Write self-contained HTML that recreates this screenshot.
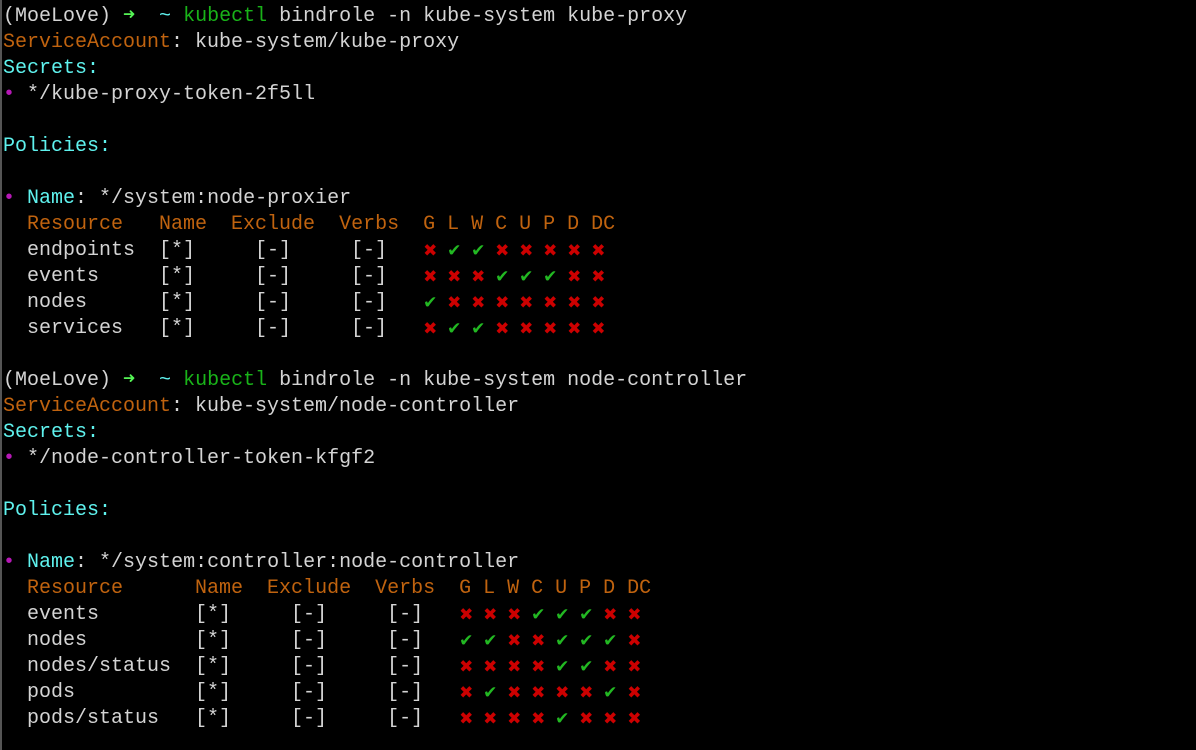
<!DOCTYPE html>
<html><head><meta charset="utf-8"><style>
html,body{margin:0;padding:0;background:#000;width:1196px;height:750px;overflow:hidden}
body{border-left:2px solid #555;box-sizing:border-box}
pre{margin:0;padding:4px 0 0 1px;font-family:"Liberation Mono","DejaVu Sans Mono",monospace;font-size:20px;line-height:26px;color:#d4d4d4;white-space:pre}
.o{color:#c0630f}.c{color:#5ff2ee}.g{color:#19b319}.a{color:#55f555;display:inline-block;width:12px;height:26px;line-height:26px;vertical-align:top;text-align:center}
.m{color:#b618b6}
.x,.v{display:inline-block;width:12px;height:26px;line-height:26px;vertical-align:top;text-align:center;font-family:"DejaVu Sans",sans-serif;font-size:17px}
.x{color:#cc0000}.v{color:#22b822}
</style></head><body><pre>(MoeLove) <span class="a">➜</span>  <span class="c">~</span> <span class="g">kubectl</span> bindrole -n kube-system kube-proxy
<span class="o">ServiceAccount</span>: kube-system/kube-proxy
<span class="c">Secrets:</span>
<span class="m">•</span> */kube-proxy-token-2f5ll

<span class="c">Policies:</span>

<span class="m">•</span> <span class="c">Name</span>: */system:node-proxier
  <span class="o">Resource   Name  Exclude  Verbs  G L W C U P D DC</span>
  endpoints  [*]     [-]     [-]   <span class="x">✖</span> <span class="v">✔</span> <span class="v">✔</span> <span class="x">✖</span> <span class="x">✖</span> <span class="x">✖</span> <span class="x">✖</span> <span class="x">✖</span>
  events     [*]     [-]     [-]   <span class="x">✖</span> <span class="x">✖</span> <span class="x">✖</span> <span class="v">✔</span> <span class="v">✔</span> <span class="v">✔</span> <span class="x">✖</span> <span class="x">✖</span>
  nodes      [*]     [-]     [-]   <span class="v">✔</span> <span class="x">✖</span> <span class="x">✖</span> <span class="x">✖</span> <span class="x">✖</span> <span class="x">✖</span> <span class="x">✖</span> <span class="x">✖</span>
  services   [*]     [-]     [-]   <span class="x">✖</span> <span class="v">✔</span> <span class="v">✔</span> <span class="x">✖</span> <span class="x">✖</span> <span class="x">✖</span> <span class="x">✖</span> <span class="x">✖</span>

(MoeLove) <span class="a">➜</span>  <span class="c">~</span> <span class="g">kubectl</span> bindrole -n kube-system node-controller
<span class="o">ServiceAccount</span>: kube-system/node-controller
<span class="c">Secrets:</span>
<span class="m">•</span> */node-controller-token-kfgf2

<span class="c">Policies:</span>

<span class="m">•</span> <span class="c">Name</span>: */system:controller:node-controller
  <span class="o">Resource      Name  Exclude  Verbs  G L W C U P D DC</span>
  events        [*]     [-]     [-]   <span class="x">✖</span> <span class="x">✖</span> <span class="x">✖</span> <span class="v">✔</span> <span class="v">✔</span> <span class="v">✔</span> <span class="x">✖</span> <span class="x">✖</span>
  nodes         [*]     [-]     [-]   <span class="v">✔</span> <span class="v">✔</span> <span class="x">✖</span> <span class="x">✖</span> <span class="v">✔</span> <span class="v">✔</span> <span class="v">✔</span> <span class="x">✖</span>
  nodes/status  [*]     [-]     [-]   <span class="x">✖</span> <span class="x">✖</span> <span class="x">✖</span> <span class="x">✖</span> <span class="v">✔</span> <span class="v">✔</span> <span class="x">✖</span> <span class="x">✖</span>
  pods          [*]     [-]     [-]   <span class="x">✖</span> <span class="v">✔</span> <span class="x">✖</span> <span class="x">✖</span> <span class="x">✖</span> <span class="x">✖</span> <span class="v">✔</span> <span class="x">✖</span>
  pods/status   [*]     [-]     [-]   <span class="x">✖</span> <span class="x">✖</span> <span class="x">✖</span> <span class="x">✖</span> <span class="v">✔</span> <span class="x">✖</span> <span class="x">✖</span> <span class="x">✖</span>
</pre></body></html>
